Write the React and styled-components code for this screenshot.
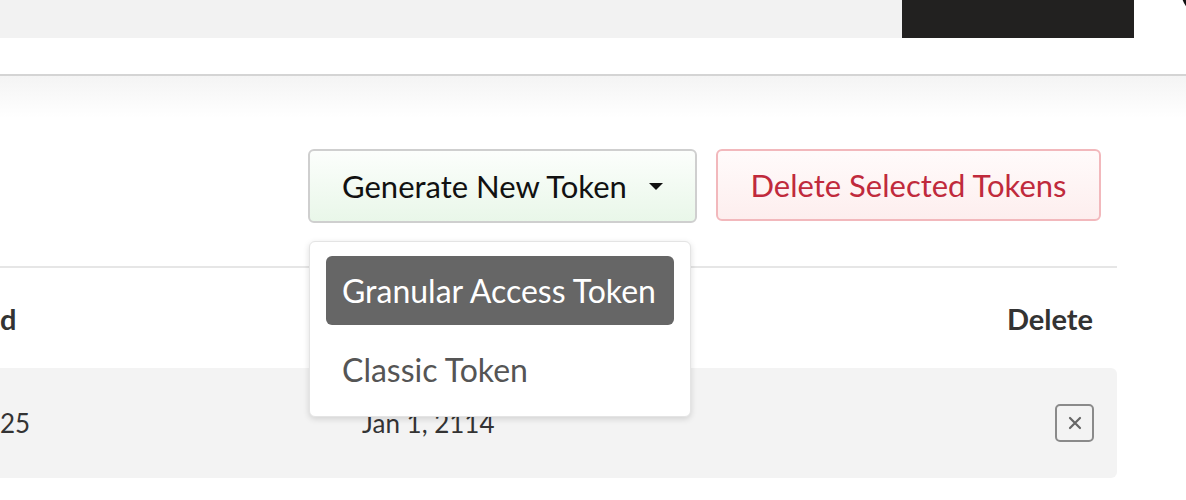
import React, { useState } from 'react'
import styled, { createGlobalStyle } from 'styled-components'

const GlobalStyle = createGlobalStyle`
  body {
    margin: 0;
    overflow: hidden;
    background: #fff;
    font-family: Lato, "Noto Sans", sans-serif;
    color: #333;
  }
`

const tokenTypes = ['Granular Access Token', 'Classic Token']

const App = () => {
  const [active] = useState(0)

  return (
    <>
      <GlobalStyle />
      <TopBar>
        <SearchBox />
        <SearchButton />
        <UserIcon viewBox="0 0 40 40" aria-hidden="true">
          <path d="M0 -10 C 1 0, 4 6, 10 10" fill="none" stroke="#111" strokeWidth="3" />
        </UserIcon>
      </TopBar>
      <Main>
        <Content>
          <Actions>
            <DropWrap>
              <GenerateButton>
                Generate New Token
                <Caret viewBox="0 0 14 7" aria-hidden="true">
                  <path d="M0 0 L14 0 L7 7 Z" fill="#111" />
                </Caret>
              </GenerateButton>
              <Menu>
                {tokenTypes.map((type, i) => (
                  <MenuItem key={type} $active={i === active}>
                    {type}
                  </MenuItem>
                ))}
              </Menu>
            </DropWrap>
            <DangerButton>Delete Selected Tokens</DangerButton>
          </Actions>
          <Table>
            <HeadRow>
              <HeadCell>d</HeadCell>
              <HeadCell $right>Delete</HeadCell>
            </HeadRow>
            <Row>
              <Cell $width="362px">25</Cell>
              <Cell $grow>Jan 1, 2114</Cell>
              <RemoveBox aria-label="delete token">
                <svg width="14" height="14" viewBox="0 0 14 14" aria-hidden="true">
                  <path d="M2 2 L12 12 M12 2 L2 12" stroke="#666" strokeWidth="2.2" strokeLinecap="round" />
                </svg>
              </RemoveBox>
            </Row>
          </Table>
        </Content>
      </Main>
    </>
  )
}

const TopBar = styled.header`
  display: flex;
  align-items: flex-start;
  height: 74px;
  border-bottom: 2px solid #d4d4d4;
`

const SearchBox = styled.div`
  flex: none;
  width: 902px;
  height: 38px;
  background: #f2f2f2;
`

const SearchButton = styled.div`
  flex: none;
  width: 232px;
  height: 38px;
  background: #222120;
`

const UserIcon = styled.svg`
  flex: none;
  width: 40px;
  height: 40px;
  margin-left: 48px;
`

const Main = styled.main`
  background: linear-gradient(#f4f4f4, #fff 42px);
  padding-top: 73px;
`

const Content = styled.div`
  width: 1117px;
`

const Actions = styled.div`
  display: flex;
  justify-content: flex-end;
  align-items: flex-start;
  gap: 19px;
  padding-right: 16px;
  margin-bottom: 43px;
`

const DropWrap = styled.div`
  position: relative;
`

const baseButton = `
  display: flex;
  align-items: center;
  box-sizing: border-box;
  border-radius: 6px;
  font-family: Lato, "Noto Sans", sans-serif;
  font-size: 31px;
  cursor: pointer;
`

const GenerateButton = styled.button`
  ${baseButton}
  width: 389px;
  height: 74px;
  padding: 0 32px 0 32px;
  justify-content: space-between;
  border: 2px solid #cfcfcf;
  background: linear-gradient(#fcfefc, #e9f7e9);
  color: #111;
`

const Caret = styled.svg`
  width: 14px;
  height: 7px;
`

const DangerButton = styled.button`
  ${baseButton}
  width: 385px;
  height: 72px;
  justify-content: center;
  border: 2px solid #f2b8bc;
  background: linear-gradient(#fffbfb, #fdeeee);
  color: #c02a3c;
`

const Menu = styled.div`
  position: absolute;
  top: 92px;
  left: 1px;
  z-index: 2;
  box-sizing: border-box;
  width: 382px;
  height: 176px;
  padding: 14px 16px 12px;
  display: flex;
  flex-direction: column;
  gap: 10px;
  background: #fff;
  border: 1px solid #e4e4e4;
  border-radius: 6px;
  box-shadow: 0 2px 6px rgba(0, 0, 0, 0.14);
`

const MenuItem = styled.div`
  height: 70px;
  display: flex;
  align-items: center;
  padding-left: 16px;
  border-radius: 6px;
  font-size: 32px;
  background: ${p => (p.$active ? '#666' : 'transparent')};
  color: ${p => (p.$active ? '#fff' : '#555')};
`

const Table = styled.section`
  border-top: 2px solid #e6e6e6;
`

const HeadRow = styled.div`
  display: flex;
  justify-content: space-between;
  align-items: center;
  height: 100px;
  padding-right: 24px;
`

const HeadCell = styled.div`
  font-size: 29px;
  font-weight: 700;
  color: #333;
  text-align: ${p => (p.$right ? 'right' : 'left')};
`

const Row = styled.div`
  display: flex;
  align-items: center;
  height: 110px;
  padding-right: 23px;
  background: #f3f3f3;
  border-radius: 0 6px 6px 0;
`

const Cell = styled.div`
  font-size: 26px;
  color: #333;
  width: ${p => p.$width || 'auto'};
  flex: ${p => (p.$grow ? 1 : 'none')};
`

const RemoveBox = styled.button`
  width: 39px;
  height: 38px;
  box-sizing: border-box;
  display: flex;
  align-items: center;
  justify-content: center;
  border: 2px solid #8a8a8a;
  border-radius: 5px;
  background: transparent;
  padding: 0;
`

export default App
